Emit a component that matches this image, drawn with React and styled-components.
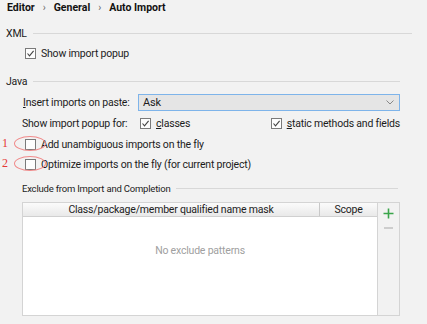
import React from "react";
import styled, { createGlobalStyle } from "styled-components";

const Global = createGlobalStyle`
  html, body { margin: 0; padding: 0; background: #f2f2f2; }
  body { font-family: Roboto, "Noto Sans", sans-serif; font-size: 10.5px; letter-spacing: -0.2px; color: #1c1c1c; }
`;

const Page = styled.div`
  position: relative;
  width: 427px;
  height: 324px;
  overflow: hidden;
  display: flex;
  flex-direction: column;
`;

const Breadcrumb = styled.div`
  height: 14px;
  display: flex;
  align-items: center;
  padding-left: 7px;
  gap: 8px;
  font-weight: 700;
  font-size: 10.5px;
  letter-spacing: 0;
  color: #111;
`;

const Sep = styled.span`
  font-weight: 400;
  color: #666;
  font-size: 10px;
`;

const SectionTitle = styled.div`
  margin-top: ${(p) => p.$mt}px;
  height: 14px;
  display: flex;
  align-items: center;
  gap: 6px;
  font-size: ${(p) => p.$fs ?? 10.5}px;
  padding-left: ${(p) => p.$pl ?? 6}px;
  padding-right: ${(p) => p.$pr}px;
  &::after {
    content: "";
    flex: 1;
    height: 1px;
    background: #d8d8d8;
  }
`;

const Row = styled.div`
  margin-top: ${(p) => p.$mt}px;
  height: ${(p) => p.$h ?? 14}px;
  display: flex;
  align-items: center;
  padding-left: ${(p) => p.$pl}px;
  padding-right: 27px;
`;

const Box = styled.span`
  width: 9px;
  height: 9px;
  border: 1px solid #7a7a7a;
  background: #fdfdfd;
  display: inline-flex;
  align-items: center;
  justify-content: center;
  flex: none;
  margin-right: 5px;
`;

const Check = styled.label`
  display: inline-flex;
  align-items: center;
  white-space: nowrap;
`;

const Label = styled.span`
  white-space: nowrap;
  width: ${(p) => p.$w}px;
  flex: none;
`;

const U = styled.span`
  text-decoration: underline;
  text-underline-offset: 1px;
`;

const Combo = styled.div`
  flex: 1;
  height: 15px;
  border: 1px solid #7eb4ea;
  background: #e5e5e5;
  display: flex;
  align-items: center;
  justify-content: space-between;
  padding: 0 5px 0 4px;
  font-size: 11px;
`;

const Spacer = styled.div`
  flex: 1;
`;

const TableWrap = styled.div`
  margin-top: 7px;
  margin-left: 22px;
  width: 378px;
  height: 114px;
  display: flex;
`;

const Table = styled.div`
  flex: 1;
  display: flex;
  flex-direction: column;
  border: 1px solid #d4d4d4;
  border-right: none;
  background: #fff;
`;

const Header = styled.div`
  height: 13px;
  display: flex;
  background: linear-gradient(#fbfbfb, #e9e9e9);
  border-bottom: 1px solid #d0d0d0;
`;

const HeadCell = styled.div`
  width: ${(p) => p.$w}px;
  flex: ${(p) => (p.$w ? "none" : 1)};
  display: flex;
  align-items: center;
  justify-content: center;
  border-left: ${(p) => (p.$sep ? "1px solid #c8c8c8" : "none")};
  white-space: nowrap;
  color: #222;
`;

const Empty = styled.div`
  padding-top: 27px;
  text-align: center;
  color: #a0a0a0;
`;

const Tools = styled.div`
  width: 21px;
  border: 1px solid #d4d4d4;
  display: flex;
  flex-direction: column;
  align-items: center;
  padding-top: 5px;
  gap: 8px;
`;

const Num = styled.span`
  position: absolute;
  left: 2px;
  top: ${(p) => p.$top}px;
  color: #e53935;
  font-size: 12px;
  font-family: "Liberation Serif", serif;
`;

const Ellipse = styled.span`
  position: absolute;
  left: 14px;
  top: ${(p) => p.$top}px;
  width: 30px;
  height: 13px;
  border: 1px solid #f08a8a;
  border-radius: 50%;
`;

const Tick = () => (
  <svg width="9" height="9" viewBox="0 0 9 9">
    <polyline points="1.5,4.5 3.5,6.8 7.6,1.8" fill="none" stroke="#444" strokeWidth="1.1" />
  </svg>
);

const CheckBox = ({ checked, children }) => (
  <Check>
    <Box>{checked && <Tick />}</Box>
    {children}
  </Check>
);

export default function App() {
  return (
    <Page>
      <Global />
      <Breadcrumb>
        <span>Editor</span>
        <Sep>›</Sep>
        <span>General</span>
        <Sep>›</Sep>
        <span>Auto Import</span>
      </Breadcrumb>

      <SectionTitle $mt={12} $pr={15}>XML</SectionTitle>
      <Row $mt={6} $pl={25}>
        <CheckBox checked>Show import popup</CheckBox>
      </Row>

      <SectionTitle $mt={14} $pr={27}>Java</SectionTitle>
      <Row $mt={6} $h={17} $pl={23}>
        <Label $w={115}>
          <U>I</U>nsert imports on paste:
        </Label>
        <Combo>
          <span>Ask</span>
          <svg width="8" height="5" viewBox="0 0 8 5">
            <polyline points="0.5,0.5 4,4 7.5,0.5" fill="none" stroke="#888" strokeWidth="1" />
          </svg>
        </Combo>
      </Row>
      <Row $mt={5} $pl={22}>
        <Label $w={118}>Show import popup for:</Label>
        <CheckBox checked>
          <span>
            <U>c</U>lasses
          </span>
        </CheckBox>
        <Spacer />
        <CheckBox checked>
          <span>
            <U>s</U>tatic methods and fields
          </span>
        </CheckBox>
      </Row>
      <Row $mt={7} $pl={25}>
        <CheckBox>Add unambiguous imports on the fly</CheckBox>
      </Row>
      <Row $mt={6} $pl={25}>
        <CheckBox>Optimize imports on the fly (for current project)</CheckBox>
      </Row>

      <SectionTitle $mt={10} $pl={22} $pr={29} $fs={9.5}>
        Exclude from Import and Completion
      </SectionTitle>

      <TableWrap>
        <Table>
          <Header>
            <HeadCell>Class/package/member qualified name mask</HeadCell>
            <HeadCell $w={57} $sep>Scope</HeadCell>
          </Header>
          <Empty>No exclude patterns</Empty>
        </Table>
        <Tools>
          <svg width="11" height="11" viewBox="0 0 11 11">
            <path d="M5.5 0.5v10M0.5 5.5h10" stroke="#3aa54a" strokeWidth="1.6" />
          </svg>
          <svg width="9" height="2" viewBox="0 0 9 2">
            <path d="M0 1h9" stroke="#b5b5b5" strokeWidth="1.2" />
          </svg>
        </Tools>
      </TableWrap>

      <Num $top={136}>1</Num>
      <Ellipse $top={136} />
      <Num $top={156}>2</Num>
      <Ellipse $top={156} />
    </Page>
  );
}
